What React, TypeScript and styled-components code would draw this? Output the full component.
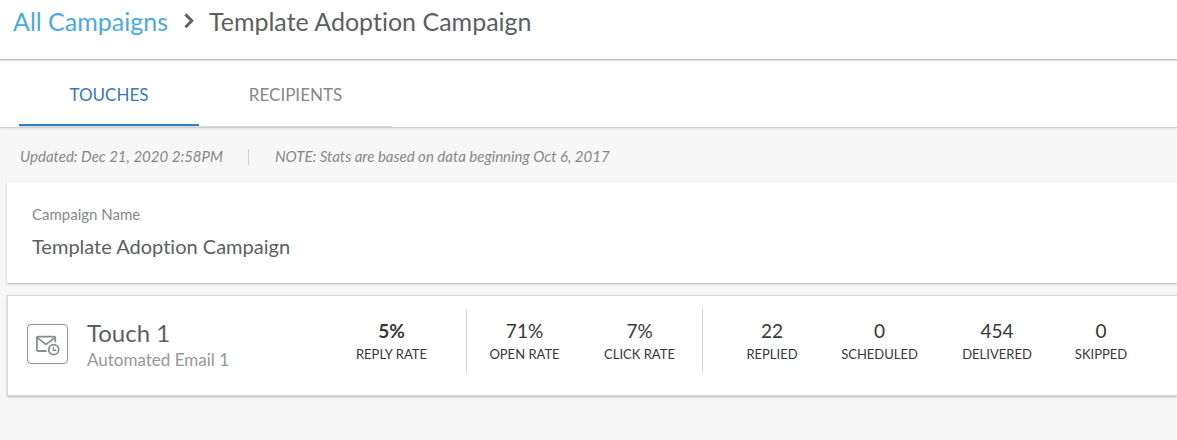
import React from "react";
import styled, { createGlobalStyle } from "styled-components";

const GlobalStyle = createGlobalStyle`
  *, *::before, *::after { box-sizing: border-box; }
  body {
    margin: 0;
    background: #f7f7f7;
    color: #5c5f61;
    font-family: Lato, "Open Sans", sans-serif;
    font-variant-ligatures: none;
  }
  h1, h2, p, dl, dt, dd { margin: 0; font-weight: 400; }
`;

const Page = styled.div`
  min-height: 100vh;
  overflow-x: hidden;
`;

const Header = styled.header`
  position: relative;
  display: flex;
  align-items: flex-start;
  height: 60px;
  padding: 5px 13px 0;
  background: #fff;
  border-bottom: 1px solid #bababa;
  box-shadow: 0 1px 2px rgba(0, 0, 0, 0.12);
  font-size: 25px;
  line-height: 32px;
  white-space: nowrap;
`;

const CrumbLink = styled.a`
  color: #4aa9e4;
  text-decoration: none;
`;

const Chevron = styled.svg`
  width: 10px;
  height: 16px;
  margin: 8px 15px 0 16px;
`;

const CrumbTitle = styled.h1`
  font-size: 25px;
  line-height: 32px;
`;

const TabBar = styled.nav`
  display: flex;
  align-items: flex-end;
  height: 68px;
  padding-left: 19px;
  background: #fff;
  border-bottom: 1px solid #cfcfcf;
  box-shadow: 0 1px 2px rgba(0, 0, 0, 0.08);
`;

const TabList = styled.div`
  display: flex;
  border-bottom: 1px solid #dadada;
`;

const Tab = styled.button<{ $active?: boolean; $width: number }>`
  width: ${(p) => p.$width}px;
  height: 65px;
  padding: 5px 0 0;
  background: none;
  border: 0;
  border-bottom: 2px solid ${(p) => (p.$active ? "#2f80c3" : "transparent")};
  color: ${(p) => (p.$active ? "#3a78b8" : "#85888a")};
  font: 400 17px/24px Lato, "Open Sans", sans-serif;
  text-transform: uppercase;
  cursor: pointer;
`;

const Notes = styled.div`
  display: flex;
  align-items: center;
  height: 54px;
  padding: 2px 20px 0;
  color: #85888a;
  font-size: 15px;
  font-style: italic;
  line-height: 20px;
  white-space: nowrap;
`;

const NoteDivider = styled.span`
  width: 1px;
  height: 16px;
  margin: 2px 26px 0 25px;
  background: #d2d2d2;
`;

const Card = styled.section`
  margin-left: 7px;
  background: #fff;
  box-shadow: 0 1px 2px rgba(0, 0, 0, 0.28);
`;

const NameCard = styled(Card)`
  padding: 22px 25px 24px;
`;

const FieldLabel = styled.h2`
  color: #85888a;
  font-size: 15px;
  line-height: 20px;
`;

const FieldValue = styled.p`
  margin-top: 9px;
  font-size: 20px;
  line-height: 26px;
`;

const TouchCard = styled(Card)`
  display: flex;
  align-items: flex-start;
  height: 101px;
  margin-top: 12px;
  padding: 13px 0 0 19px;
  border: 1px solid #d8dada;
  border-right: 0;
`;

const IconBox = styled.div`
  display: flex;
  flex: none;
  align-items: center;
  justify-content: center;
  width: 41px;
  height: 40px;
  margin: 15px 19px 0 0;
  border: 1px solid #8f9292;
  border-radius: 4px;
`;

const TouchInfo = styled.div`
  flex: none;
  width: 230px;
  padding-top: 8px;
`;

const TouchTitle = styled.h2`
  font-size: 24px;
  line-height: 32px;
`;

const TouchType = styled.p`
  color: #969899;
  font-size: 17px;
  line-height: 22px;
`;

const StatGroup = styled.dl<{ $pad?: string }>`
  display: flex;
  flex: none;
  height: 64px;
  padding: ${(p) => p.$pad ?? "0"};

  & + & { border-left: 1px solid #d4d6d6; }
`;

const Stat = styled.div<{ $width: number }>`
  display: flex;
  flex-direction: column-reverse;
  justify-content: flex-end;
  width: ${(p) => p.$width}px;
  padding-top: 10px;
  color: #34383a;
  text-align: center;
`;

const StatLabel = styled.dt`
  font-size: 13px;
  line-height: 22px;
  text-transform: uppercase;
`;

const StatValue = styled.dd<{ $strong?: boolean }>`
  font-size: 19px;
  font-weight: ${(p) => (p.$strong ? 700 : 400)};
  line-height: 24px;
`;

type StatData = { label: string; value: string; width: number; strong?: boolean };

const groups: { pad?: string; stats: StatData[] }[] = [
  { stats: [{ label: "Reply Rate", value: "5%", width: 149, strong: true }] },
  {
    pad: "0 5px 0 0",
    stats: [
      { label: "Open Rate", value: "71%", width: 115 },
      { label: "Click Rate", value: "7%", width: 115 },
    ],
  },
  {
    pad: "0 0 0 22px",
    stats: [
      { label: "Replied", value: "22", width: 94 },
      { label: "Scheduled", value: "0", width: 121 },
      { label: "Delivered", value: "454", width: 114 },
      { label: "Skipped", value: "0", width: 94 },
    ],
  },
];

const MailClockIcon = () => (
  <svg width="25" height="24" viewBox="0 0 25 24" fill="none" stroke="#849090" strokeWidth="1.8" aria-hidden="true">
    <path d="M11.6 19H3a1.1 1.1 0 0 1-1.1-1.1V5.7A1.1 1.1 0 0 1 3 4.6h16.1a1.1 1.1 0 0 1 1.1 1.1v4.6" />
    <path d="M2.2 5.6l8.8 6.8 8.8-6.8" />
    <circle cx="18.7" cy="17.7" r="5" />
    <path d="M18.4 14.8v3.4h2.8" strokeWidth="1.4" />
  </svg>
);

export default function App() {
  return (
    <Page>
      <GlobalStyle />
      <Header>
        <CrumbLink href="#campaigns">All Campaigns</CrumbLink>
        <Chevron viewBox="0 0 10 16" fill="none" stroke="#5c5f61" strokeWidth="2.9" aria-hidden="true">
          <path d="M1.4 1.4L7.8 7.8L1.4 14.2" />
        </Chevron>
        <CrumbTitle>Template Adoption Campaign</CrumbTitle>
      </Header>
      <TabBar>
        <TabList>
          <Tab $active $width={180}>Touches</Tab>
          <Tab $width={193}>Recipients</Tab>
        </TabList>
      </TabBar>
      <main>
        <Notes>
          <span>Updated: Dec 21, 2020 2:58PM</span>
          <NoteDivider />
          <span>NOTE: Stats are based on data beginning Oct 6, 2017</span>
        </Notes>
        <NameCard>
          <FieldLabel>Campaign Name</FieldLabel>
          <FieldValue>Template Adoption Campaign</FieldValue>
        </NameCard>
        <TouchCard>
          <IconBox>
            <MailClockIcon />
          </IconBox>
          <TouchInfo>
            <TouchTitle>Touch 1</TouchTitle>
            <TouchType>Automated Email 1</TouchType>
          </TouchInfo>
          {groups.map((group, i) => (
            <StatGroup key={i} $pad={group.pad}>
              {group.stats.map((s) => (
                <Stat key={s.label} $width={s.width}>
                  <StatLabel>{s.label}</StatLabel>
                  <StatValue $strong={s.strong}>{s.value}</StatValue>
                </Stat>
              ))}
            </StatGroup>
          ))}
        </TouchCard>
      </main>
    </Page>
  );
}
